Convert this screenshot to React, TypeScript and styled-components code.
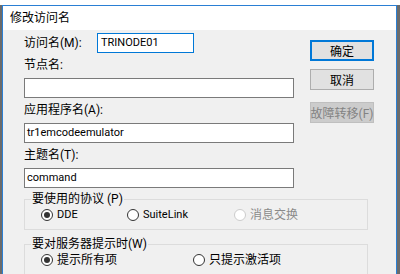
import React from "react";
import styled, { createGlobalStyle } from "styled-components";

const GlobalStyle = createGlobalStyle`
  html, body {
    margin: 0;
    padding: 0;
    background: #ffffff;
    font-family: Roboto, "Noto Sans CJK SC", sans-serif;
    font-size: 12px;
    color: #000000;
  }
  * { box-sizing: border-box; }
`;

const Page = styled.div`
  width: 400px;
  height: 274px;
  padding-top: 5px;
  overflow: hidden;
`;

const Shadow = styled.div`
  height: 100%;
  border-left: 2px solid #6b6b6b;
  border-right: 3px solid #6b6b6b;
`;

const Window = styled.div`
  height: 100%;
  border: 1px solid #2a7fd4;
  border-bottom: none;
  display: flex;
  flex-direction: column;
`;

const TitleBar = styled.div`
  height: 24px;
  line-height: 24px;
  padding-left: 7px;
  background: #ffffff;
  font-size: 12px;
`;

const Body = styled.div`
  flex: 1;
  background: #f0f0f0;
  padding: 3px 0 0 21px;
  display: flex;
  flex-direction: column;
`;

const Top = styled.div`
  display: flex;
  gap: 16px;
`;

const Form = styled.div`
  width: 270px;
  display: flex;
  flex-direction: column;
  gap: 2px;
`;

const InlineRow = styled.div`
  display: flex;
  align-items: center;
  height: 20px;
`;

const InlineLabel = styled.span`
  width: 73px;
  line-height: 20px;
`;

const Field = styled.div`
  display: flex;
  flex-direction: column;
  gap: 3px;
`;

const Label = styled.div`
  height: 20px;
  line-height: 20px;
`;

const Input = styled.div<{ $focused?: boolean; $width?: number }>`
  width: ${(p) => (p.$width ? `${p.$width}px` : "100%")};
  height: 20px;
  line-height: 18px;
  font-size: 11px;
  background: #ffffff;
  border: 1px solid ${(p) => (p.$focused ? "#0078d7" : "#7a7a7a")};
  padding: 0 ${(p) => (p.$focused ? 3 : 2)}px;
  white-space: nowrap;
  overflow: hidden;
`;

const Buttons = styled.div`
  display: flex;
  flex-direction: column;
  padding-top: 7px;
`;

const Button = styled.div<{ $variant?: "default" | "normal" | "disabled"; $gap?: number }>`
  width: 64px;
  height: 21px;
  margin-top: ${(p) => p.$gap ?? 0}px;
  display: flex;
  align-items: center;
  justify-content: center;
  white-space: nowrap;
  font-size: 12px;
  background: ${(p) => (p.$variant === "disabled" ? "#cccccc" : "#e1e1e1")};
  color: ${(p) => (p.$variant === "disabled" ? "#838383" : "#000000")};
  border: ${(p) =>
    p.$variant === "default"
      ? "2px solid #0078d7"
      : p.$variant === "disabled"
      ? "1px solid #bfbfbf"
      : "1px solid #adadad"};
`;

const Groups = styled.div`
  width: 344px;
  margin-top: 4px;
  display: flex;
  flex-direction: column;
  gap: 7px;
`;

const Group = styled.fieldset`
  margin: 0;
  min-width: 0;
  border: 1px solid #dcdcdc;
  padding: 0 0 5px 6px;
`;

const Legend = styled.legend`
  padding: 0 1px;
  font-size: 12px;
  line-height: 14px;
`;

const RadioRow = styled.div`
  display: flex;
  align-items: center;
  height: 18px;
  padding-left: 10px;
`;

const RadioItem = styled.div<{ $width?: number; $disabled?: boolean }>`
  display: flex;
  align-items: center;
  gap: 4px;
  width: ${(p) => (p.$width ? `${p.$width}px` : "auto")};
  color: ${(p) => (p.$disabled ? "#8a8a8a" : "#000000")};
  line-height: 18px;
`;

const RadioText = styled.span<{ $latin?: boolean }>`
  font-size: ${(p) => (p.$latin ? 11 : 12)}px;
`;

const Circle = styled.span<{ $checked?: boolean; $disabled?: boolean }>`
  width: 12px;
  height: 12px;
  border-radius: 50%;
  border: 1px solid ${(p) => (p.$disabled ? "#cccccc" : "#333333")};
  background: #ffffff;
  display: flex;
  align-items: center;
  justify-content: center;
  flex: none;
  &::after {
    content: "";
    display: ${(p) => (p.$checked ? "block" : "none")};
    width: 6px;
    height: 6px;
    border-radius: 50%;
    background: #333333;
  }
`;

const Radio = ({
  label,
  checked,
  disabled,
  width,
  latin,
}: {
  label: string;
  checked?: boolean;
  disabled?: boolean;
  width?: number;
  latin?: boolean;
}) => (
  <RadioItem $width={width} $disabled={disabled}>
    <Circle $checked={checked} $disabled={disabled} />
    <RadioText $latin={latin}>{label}</RadioText>
  </RadioItem>
);

export default function App() {
  return (
    <Page>
      <GlobalStyle />
      <Shadow>
        <Window>
          <TitleBar>修改访问名</TitleBar>
          <Body>
            <Top>
              <Form>
                <InlineRow>
                  <InlineLabel>访问名(M):</InlineLabel>
                  <Input $focused $width={97}>TRINODE01</Input>
                </InlineRow>
                <Field>
                  <Label>节点名:</Label>
                  <Input />
                </Field>
                <Field>
                  <Label>应用程序名(A):</Label>
                  <Input>tr1emcodeemulator</Input>
                </Field>
                <Field>
                  <Label>主题名(T):</Label>
                  <Input>command</Input>
                </Field>
              </Form>
              <Buttons>
                <Button $variant="default">确定</Button>
                <Button $variant="normal" $gap={8}>取消</Button>
                <Button $variant="disabled" $gap={12}>故障转移(F)</Button>
              </Buttons>
            </Top>
            <Groups>
              <Group>
                <Legend>要使用的协议 (P)</Legend>
                <RadioRow>
                  <Radio label="DDE" checked latin width={86} />
                  <Radio label="SuiteLink" latin width={107} />
                  <Radio label="消息交换" disabled />
                </RadioRow>
              </Group>
              <Group>
                <Legend>要对服务器提示时(W)</Legend>
                <RadioRow>
                  <Radio label="提示所有项" checked width={152} />
                  <Radio label="只提示激活项" />
                </RadioRow>
              </Group>
            </Groups>
          </Body>
        </Window>
      </Shadow>
    </Page>
  );
}
